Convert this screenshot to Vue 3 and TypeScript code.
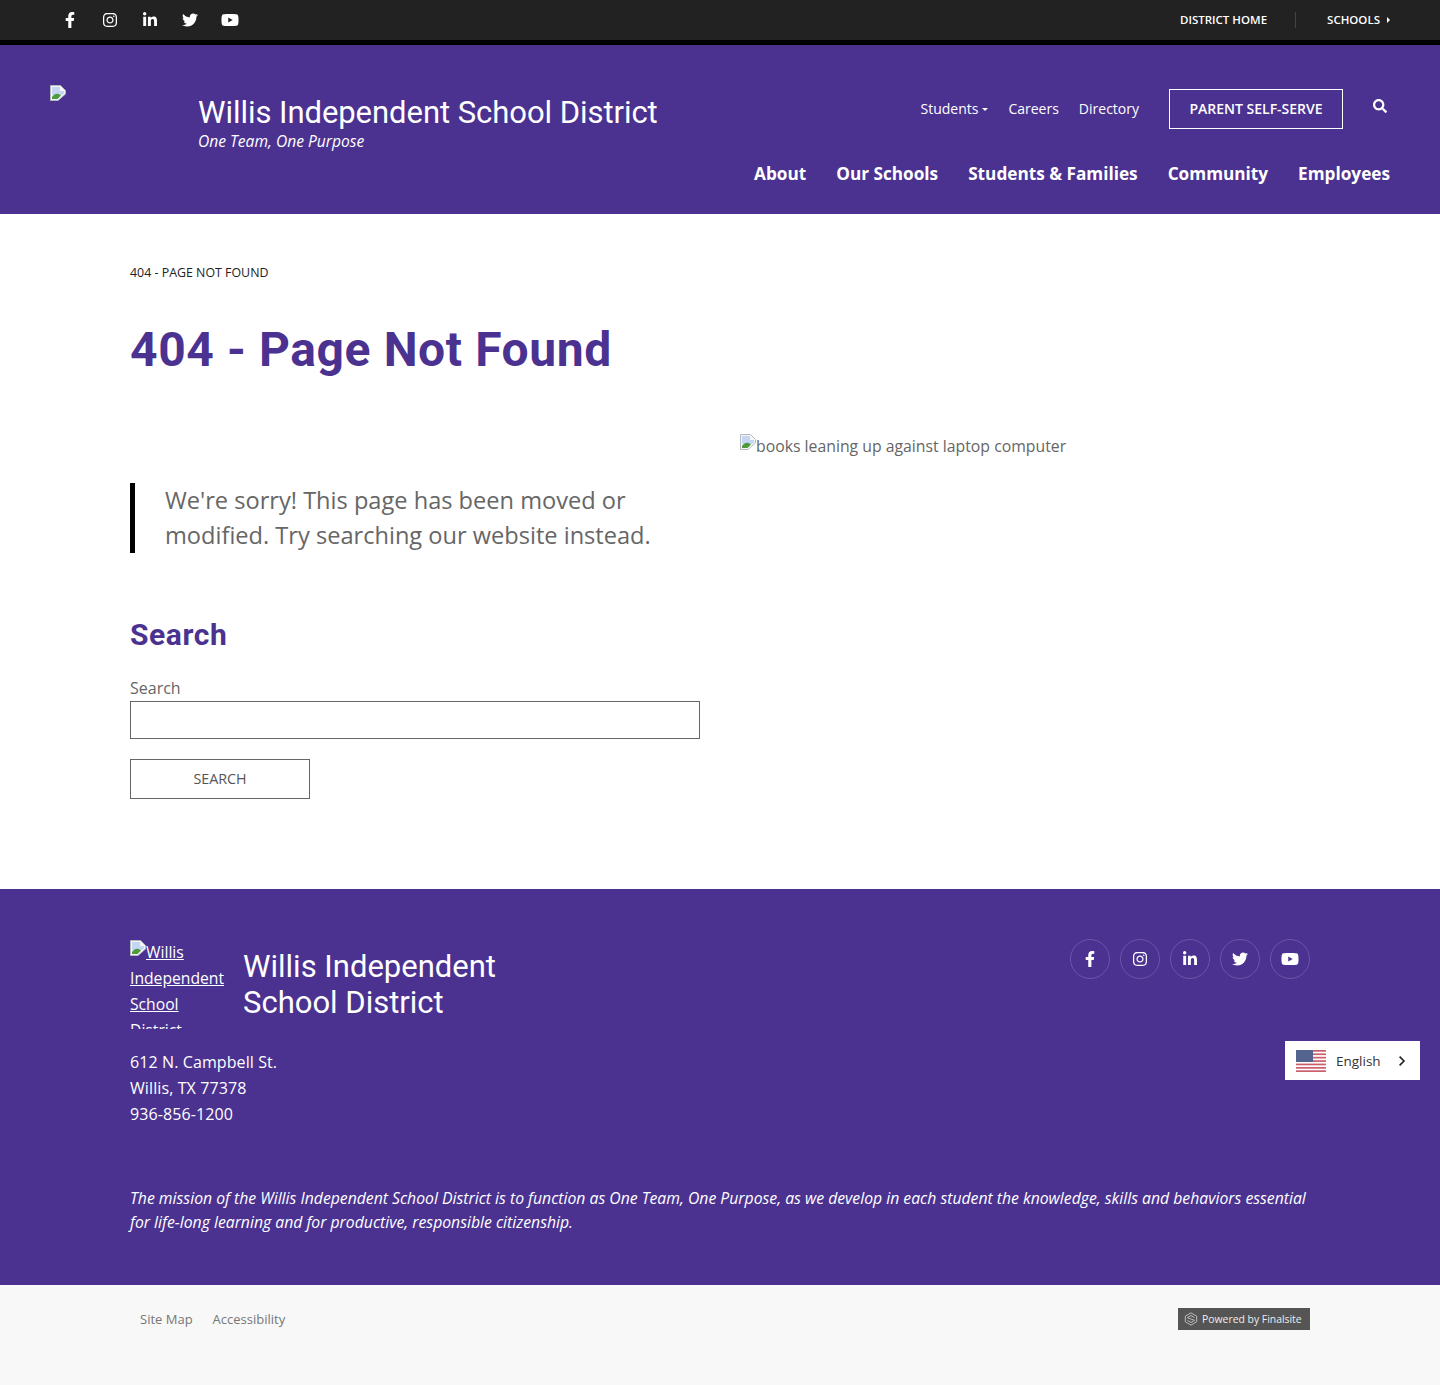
<template>
  <div class="page">
    <div class="topbar">
      <div class="top-social">
        <a v-for="icon in socials" :key="icon.name" class="top-icon" href="#" :aria-label="icon.name">
          <svg :viewBox="icon.box" :width="icon.size" :height="icon.size" fill="#fff"><path :d="icon.d" /></svg>
        </a>
      </div>
      <div class="top-links">
        <a href="#" class="top-link">DISTRICT HOME</a>
        <span class="top-sep"></span>
        <a href="#" class="top-link">SCHOOLS<i class="caret-right"></i></a>
      </div>
    </div>

    <header class="header">
      <div class="brand">
        <div class="logo-slot"><BrokenIcon /></div>
        <div class="brand-text">
          <div class="brand-name">Willis Independent School District</div>
          <div class="brand-tag">One Team, One Purpose</div>
        </div>
      </div>
      <div class="header-right">
        <div class="util-row">
          <a href="#" class="util-link">Students<i class="caret-down"></i></a>
          <a href="#" class="util-link">Careers</a>
          <a href="#" class="util-link">Directory</a>
          <a href="#" class="parent-btn">PARENT SELF-SERVE</a>
          <a href="#" class="search-icon" aria-label="Search">
            <svg viewBox="0 0 512 512" width="14" height="14" fill="#fff"><path :d="searchPath" /></svg>
          </a>
        </div>
        <nav class="main-nav">
          <a v-for="item in mainNav" :key="item" href="#">{{ item }}</a>
        </nav>
      </div>
    </header>

    <main class="content">
      <div class="crumb">404 - PAGE NOT FOUND</div>
      <h1>404 - Page Not Found</h1>
      <div class="columns">
        <div class="col-left">
          <blockquote>We're sorry! This page has been moved or modified. Try searching our website instead.</blockquote>
          <h2>Search</h2>
          <label for="q">Search</label>
          <input id="q" type="text" />
          <button type="button">SEARCH</button>
        </div>
        <div class="col-right">
          <BrokenIcon /><span>books leaning up against laptop computer</span>
        </div>
      </div>
    </main>

    <footer class="footer">
      <div class="footer-top">
        <div class="footer-brand">
          <a href="#" class="footer-logo"><BrokenIcon />Willis Independent School District</a>
          <div class="footer-name">Willis Independent School District</div>
        </div>
        <div class="footer-social">
          <a v-for="icon in socials" :key="icon.name" class="circle" href="#" :aria-label="icon.name">
            <svg :viewBox="icon.box" :width="icon.size" :height="icon.size" fill="#fff"><path :d="icon.d" /></svg>
          </a>
        </div>
      </div>
      <address>612 N. Campbell St.<br />Willis, TX 77378<br />936-856-1200</address>
      <p class="mission">The mission of the Willis Independent School District is to function as One Team, One Purpose, as we develop in each student the knowledge, skills and behaviors essential for life-long learning and for productive, responsible citizenship.</p>
      <div class="lang">
        <svg class="flag" viewBox="0 0 30 22" width="30" height="22">
          <rect width="30" height="22" fill="#fff" />
          <rect v-for="y in stripes" :key="y" x="0" :y="y" width="30" height="1.7" fill="#c9606c" />
          <rect width="17" height="12" fill="#53648f" />
        </svg>
        <span>English</span>
        <svg class="chev" viewBox="0 0 10 14" width="8" height="12" fill="none" stroke="#222" stroke-width="2"><path d="M2 1.5 7.5 7 2 12.5" /></svg>
      </div>
    </footer>

    <div class="bottom">
      <div class="bottom-links">
        <a href="#">Site Map</a>
        <a href="#">Accessibility</a>
      </div>
      <a href="#" class="powered">
        <svg viewBox="0 0 16 16" width="14" height="14" fill="none" stroke="#ccc" stroke-width="1"><path d="M8 1 14.5 4.8v6.4L8 15 1.5 11.2V4.8Z" /><path d="M4 9.5 8 12l4-2.5L4 6.5 8 4l4 2.5" /></svg>
        Powered by Finalsite
      </a>
    </div>
  </div>
</template>

<script setup lang="ts">
import { h } from 'vue';

// stand-in for the browser's broken image marker
const BrokenIcon = () =>
  h('svg', { class: 'broken', viewBox: '0 0 16 16', width: 16, height: 16 }, [
    h('path', { d: 'M0.5 0.5H10.5L15.5 5.5V9L8 15.5H0.5Z', fill: '#f4f6fa', stroke: '#b5b9bd', 'stroke-width': 1 }),
    h('path', { d: 'M2 2H10V6H14V8.5L12 10H2Z', fill: '#c4d6f2' }),
    h('path', { d: 'M2 14V12C5 8 8 8 11 10.5L7.5 14Z', fill: '#4f9a3c' }),
  ]);

type Social = { name: string; box: string; size: number; d: string };

const socials: Social[] = [
  {
    name: 'Facebook',
    box: '0 0 320 512',
    size: 16,
    d: 'M279.14 288l14.22-92.66h-88.91v-60.13c0-25.35 12.42-50.06 52.24-50.06h40.42V6.26S260.43 0 225.36 0c-73.22 0-121.08 44.38-121.08 124.72v70.62H22.89V288h81.39v224h100.17V288z',
  },
  {
    name: 'Instagram',
    box: '0 0 448 512',
    size: 16,
    d: 'M224.1 141c-63.6 0-114.9 51.3-114.9 114.9s51.3 114.9 114.9 114.9S339 319.5 339 255.9 287.7 141 224.1 141zm0 189.6c-41.1 0-74.7-33.5-74.7-74.7s33.5-74.7 74.7-74.7 74.7 33.5 74.7 74.7-33.6 74.7-74.7 74.7zm146.4-194.3c0 14.9-12 26.8-26.8 26.8-14.9 0-26.8-12-26.8-26.8s12-26.8 26.8-26.8 26.8 12 26.8 26.8zm76.1 27.2c-1.7-35.9-9.9-67.7-36.2-93.9-26.2-26.2-58-34.4-93.9-36.2-37-2.1-147.9-2.1-184.9 0-35.8 1.7-67.6 9.9-93.9 36.1s-34.4 58-36.2 93.9c-2.1 37-2.1 147.9 0 184.9 1.7 35.9 9.9 67.7 36.2 93.9s58 34.4 93.9 36.2c37 2.1 147.9 2.1 184.9 0 35.9-1.7 67.7-9.9 93.9-36.2 26.2-26.2 34.4-58 36.2-93.9 2.1-37 2.1-147.8 0-184.8zM398.8 388c-7.8 19.6-22.9 34.7-42.6 42.6-29.5 11.7-99.5 9-132.1 9s-102.7 2.6-132.1-9c-19.6-7.8-34.7-22.9-42.6-42.6-11.7-29.5-9-99.5-9-132.1s-2.6-102.7 9-132.1c7.8-19.6 22.9-34.7 42.6-42.6 29.5-11.7 99.5-9 132.1-9s102.7-2.6 132.1 9c19.6 7.8 34.7 22.9 42.6 42.6 11.7 29.5 9 99.5 9 132.1s2.7 102.7-9 132.1z',
  },
  {
    name: 'LinkedIn',
    box: '0 0 448 512',
    size: 16,
    d: 'M100.28 448H7.4V148.9h92.88zM53.79 108.1C24.09 108.1 0 83.5 0 53.8a53.79 53.79 0 0 1 107.58 0c0 29.7-24.1 54.3-53.79 54.3zM447.9 448h-92.68V302.4c0-34.7-.7-79.2-48.29-79.2-48.29 0-55.69 37.7-55.69 76.7V448h-92.78V148.9h89.08v40.8h1.3c12.4-23.5 42.69-48.3 87.88-48.3 94 0 111.28 61.9 111.28 142.3V448z',
  },
  {
    name: 'Twitter',
    box: '0 0 512 512',
    size: 16,
    d: 'M459.37 151.716c.325 4.548.325 9.097.325 13.645 0 138.72-105.583 298.558-298.558 298.558-59.452 0-114.68-17.219-161.137-47.106 8.447.974 16.568 1.299 25.34 1.299 49.055 0 94.213-16.568 130.274-44.832-46.132-.975-84.792-31.188-98.112-72.772 6.498.974 12.995 1.624 19.818 1.624 9.421 0 18.843-1.3 27.614-3.573-48.081-9.747-84.143-51.98-84.143-102.985v-1.299c13.969 7.797 30.214 12.67 47.431 13.319-28.264-18.843-46.781-51.005-46.781-87.391 0-19.492 5.197-37.36 14.294-52.954 51.655 63.675 129.3 105.258 216.365 109.807-1.624-7.797-2.599-15.918-2.599-24.04 0-57.828 46.782-104.934 104.934-104.934 30.213 0 57.502 12.67 76.67 33.137 23.715-4.548 46.456-13.645 66.599-25.34-7.798 24.366-24.366 44.833-46.132 57.827 21.117-2.273 41.584-8.122 60.426-16.243-14.292 20.791-32.161 39.308-52.628 54.253z',
  },
  {
    name: 'YouTube',
    box: '0 0 576 512',
    size: 18,
    d: 'M549.655 124.083c-6.281-23.65-24.787-42.276-48.284-48.597C458.781 64 288 64 288 64S117.22 64 74.629 75.486c-23.497 6.322-42.003 24.947-48.284 48.597-11.412 42.867-11.412 132.305-11.412 132.305s0 89.438 11.412 132.305c6.281 23.65 24.787 41.5 48.284 47.821C117.22 448 288 448 288 448s170.78 0 213.371-11.486c23.497-6.321 42.003-24.171 48.284-47.821 11.412-42.867 11.412-132.305 11.412-132.305s0-89.438-11.412-132.305zm-317.51 213.508V175.185l142.739 81.205-142.739 81.201z',
  },
];

const searchPath =
  'M505 442.7L405.3 343c-4.5-4.5-10.6-7-17-7H372c27.6-35.3 44-79.7 44-128C416 93.1 322.9 0 208 0S0 93.1 0 208s93.1 208 208 208c48.3 0 92.7-16.4 128-44v16.3c0 6.4 2.5 12.5 7 17l99.7 99.7c9.4 9.4 24.6 9.4 33.9 0l28.3-28.3c9.4-9.4 9.4-24.6.1-34zM208 336c-70.7 0-128-57.2-128-128 0-70.7 57.2-128 128-128 70.7 0 128 57.2 128 128 0 70.7-57.2 128-128 128z';

const mainNav = ['About', 'Our Schools', 'Students & Families', 'Community', 'Employees'];
const stripes = [0, 3.4, 6.8, 10.2, 13.6, 17, 20.3];
</script>

<style>
body {
  margin: 0;
  background: #fff;
}

.broken {
  vertical-align: 2px;
}
</style>

<style scoped>
.page {
  position: relative;
  font-family: "Open Sans", Lato, sans-serif;
  color: #666;
  height: 1385px;
  overflow: hidden;
}

a {
  color: inherit;
  text-decoration: none;
}

.topbar {
  height: 40px;
  background: #222;
  border-bottom: 5px solid #000;
  display: flex;
  justify-content: space-between;
  align-items: center;
  padding: 0 50px;
}

.top-social {
  display: flex;
}

.top-icon {
  width: 40px;
  height: 40px;
  display: flex;
  align-items: center;
  justify-content: center;
}

.top-links {
  display: flex;
  align-items: center;
  color: #fff;
}

.top-link {
  font-size: 11.5px;
  font-weight: 600;
  line-height: 16px;
  margin-top: -1px;
}

.top-sep {
  width: 1px;
  height: 16px;
  background: #444;
  margin: 0 31px 0 28px;
}

.caret-right {
  display: inline-block;
  border-left: 3px solid #fff;
  border-top: 3px solid transparent;
  border-bottom: 3px solid transparent;
  margin-left: 7px;
  vertical-align: 1px;
}

.header {
  height: 169px;
  box-sizing: border-box;
  background: #4b3291;
  color: #fff;
  display: flex;
  justify-content: space-between;
  padding: 0 50px;
}

.brand {
  display: flex;
}

.logo-slot {
  width: 148px;
  padding-top: 40px;
}

.brand-text {
  padding-top: 49px;
}

.brand-name {
  font-family: Roboto, sans-serif;
  font-size: 31px;
  line-height: 38px;
  font-weight: 400;
  letter-spacing: -0.05px;
}

.brand-tag {
  font-size: 15.6px;
  font-style: italic;
  line-height: 20px;
  margin-top: -1px;
}

.header-right {
  display: flex;
  flex-direction: column;
  align-items: flex-end;
}

.util-row {
  display: flex;
  align-items: center;
  margin-top: 44px;
  height: 40px;
}

.util-link {
  font-size: 14px;
  line-height: 20px;
  margin-right: 20px;
  margin-top: -1px;
}

.caret-down {
  display: inline-block;
  border-top: 3px solid #fff;
  border-left: 3px solid transparent;
  border-right: 3px solid transparent;
  margin-left: 4px;
  vertical-align: 3px;
}

.parent-btn {
  width: 174px;
  height: 40px;
  box-sizing: border-box;
  border: 1px solid #fff;
  padding-bottom: 2px;
  display: flex;
  align-items: center;
  justify-content: center;
  font-size: 14px;
  font-weight: 600;
  margin-left: 10px;
}

.search-icon {
  display: flex;
  margin: -6px 3px 0 30px;
}

.main-nav {
  display: flex;
  gap: 30px;
  margin-top: 30px;
  font-size: 17.2px;
  font-weight: 700;
  line-height: 30px;
}

.content {
  height: 675px;
  box-sizing: border-box;
  padding: 50px 130px 0;
}

.crumb {
  font-size: 12.4px;
  line-height: 18px;
  color: #222;
}

h1 {
  font-family: Roboto, sans-serif;
  font-size: 48px;
  line-height: 60px;
  font-weight: 700;
  letter-spacing: 0.6px;
  color: #4b3291;
  margin: 38px 0 0;
}

.columns {
  display: grid;
  grid-template-columns: 570px 570px;
  gap: 40px;
  margin-top: 53px;
}

blockquote {
  margin: 50px 0 0;
  border-left: 5px solid #000;
  padding-left: 30px;
  font-size: 23.6px;
  line-height: 35px;
}

h2 {
  font-family: Roboto, sans-serif;
  font-size: 30px;
  line-height: 40px;
  font-weight: 700;
  letter-spacing: 0.6px;
  color: #4b3291;
  margin: 62px 0 0;
}

label {
  display: block;
  font-size: 16px;
  line-height: 20px;
  margin-top: 23px;
}

input {
  display: block;
  width: 100%;
  height: 38px;
  box-sizing: border-box;
  border: 1px solid #666;
  background: #fff;
  margin-top: 3px;
}

button {
  display: block;
  width: 180px;
  height: 40px;
  padding-bottom: 3px;
  margin-top: 20px;
  border: 1px solid #666;
  background: #fff;
  color: #555;
  font-family: inherit;
  font-size: 14.3px;
}

.col-right {
  font-size: 15.8px;
  line-height: 26px;
}

.footer {
  position: relative;
  height: 396px;
  box-sizing: border-box;
  background: #4b3291;
  color: #fff;
  padding: 50px 130px 0;
}

.footer-top {
  display: flex;
  justify-content: space-between;
}

.footer-brand {
  display: flex;
}

.footer-logo {
  display: block;
  width: 95px;
  height: 90px;
  overflow: hidden;
  font-size: 15.7px;
  line-height: 26px;
  text-decoration: underline;
}

.footer-name {
  width: 300px;
  margin-left: 18px;
  font-family: Roboto, sans-serif;
  font-size: 31px;
  line-height: 36px;
  font-weight: 400;
  margin-top: 10px;
}

.footer-social {
  display: flex;
  gap: 10px;
}

.circle {
  width: 40px;
  height: 40px;
  box-sizing: border-box;
  border: 1px solid #6a55a8;
  border-radius: 50%;
  display: flex;
  align-items: center;
  justify-content: center;
}

address {
  font-style: normal;
  font-size: 16px;
  line-height: 26px;
  letter-spacing: 0.1px;
  margin-top: 20px;
}

.mission {
  margin: 59px 0 0;
  font-size: 15.76px;
  font-style: italic;
  line-height: 24px;
}

.lang {
  position: absolute;
  left: 1285px;
  top: 152px;
  width: 135px;
  height: 39px;
  box-sizing: border-box;
  background: #fff;
  color: #333;
  display: flex;
  align-items: center;
  padding-left: 11px;
  font-size: 13.5px;
}

.flag {
  margin-right: 10px;
}

.chev {
  margin-left: 17px;
}

.bottom {
  height: 100px;
  background: #f8f8f8;
  display: flex;
  justify-content: space-between;
  align-items: flex-start;
  padding: 23px 130px 0;
  box-sizing: border-box;
}

.bottom-links {
  display: flex;
  gap: 20px;
  padding: 2px 10px 0;
  font-size: 13px;
  line-height: 18px;
  color: #777;
}

.powered {
  width: 132px;
  height: 22px;
  box-sizing: border-box;
  background: #555;
  color: #eee;
  font-size: 10.4px;
  display: flex;
  align-items: center;
  gap: 4px;
  padding-left: 6px;
  white-space: nowrap;
}
</style>
